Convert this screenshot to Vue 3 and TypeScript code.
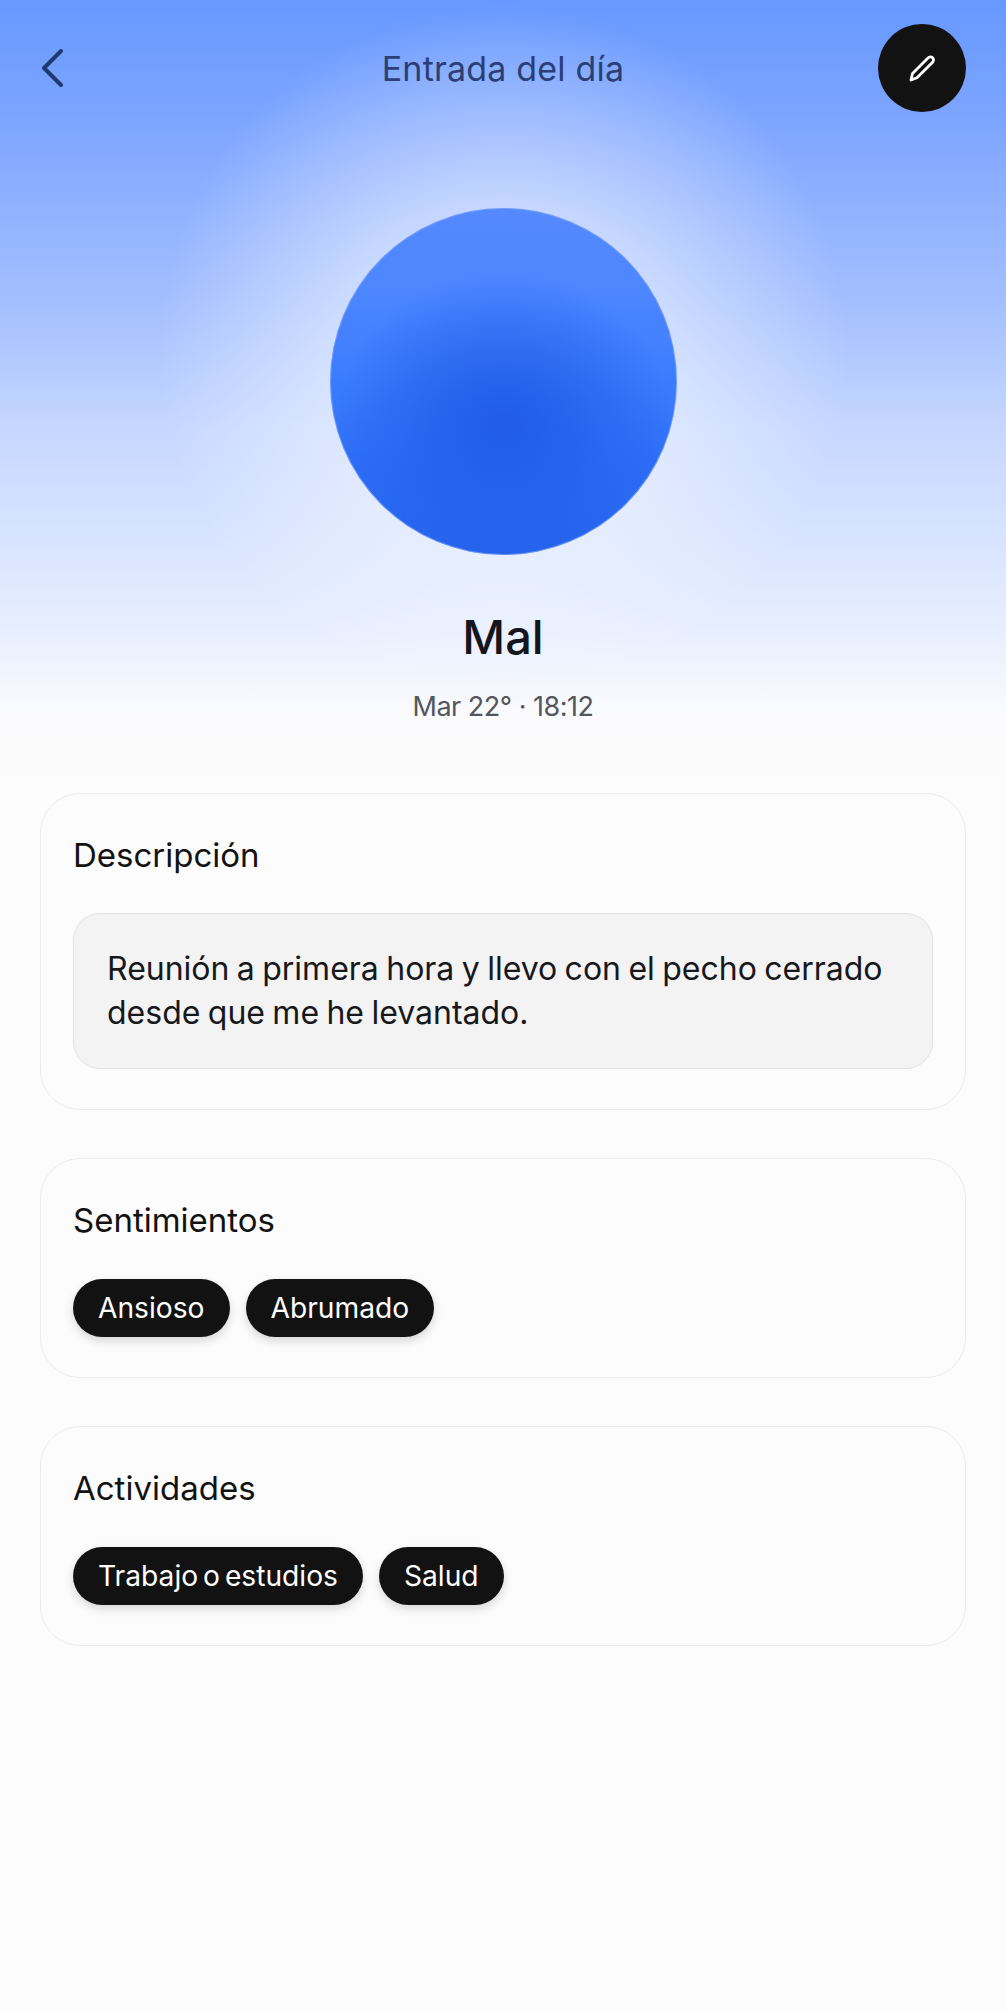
<template>
  <div class="page">
    <section class="hero">
      <header class="topbar">
        <button class="back" aria-label="Volver">
          <svg width="24" height="40" viewBox="0 0 24 40" fill="none">
            <path d="M21 3 L4 20 L21 37" stroke="#20396f" stroke-width="4" stroke-linecap="round" stroke-linejoin="round" />
          </svg>
        </button>
        <h1 class="title">Entrada del día</h1>
        <button class="edit" aria-label="Editar">
          <svg width="30" height="30" viewBox="0 0 30 30" fill="none">
            <path
              d="M4 27 L5.5 20.5 L21 5 C22.4 3.6 24.4 3.6 25.6 4.8 C26.8 6 26.8 8 25.4 9.4 L10 24.8 Z"
              stroke="#fff"
              stroke-width="2.8"
              stroke-linejoin="round"
            />
          </svg>
        </button>
      </header>
      <div class="orb"></div>
      <h2 class="mood">{{ entry.mood }}</h2>
      <p class="date">{{ entry.date }}</p>
    </section>

    <main class="cards">
      <section class="card">
        <h3 class="card-title desc-title">Descripción</h3>
        <div class="desc">{{ entry.description }}</div>
      </section>
      <section v-for="group in groups" :key="group.title" class="card">
        <h3 class="card-title">{{ group.title }}</h3>
        <div class="chips">
          <span v-for="tag in group.tags" :key="tag" class="chip">{{ tag }}</span>
        </div>
      </section>
    </main>
  </div>
</template>

<script setup lang="ts">
const entry = {
  mood: 'Mal',
  date: 'Mar 22° · 18:12',
  description: 'Reunión a primera hora y llevo con el pecho cerrado desde que me he levantado.',
}

const groups = [
  { title: 'Sentimientos', tags: ['Ansioso', 'Abrumado'] },
  { title: 'Actividades', tags: ['Trabajo o estudios', 'Salud'] },
]
</script>

<style>
html,
body {
  background: #fcfcfc;
}
</style>

<style scoped>
.page {
  width: 1006px;
  min-height: 2012px;
  background: #fcfcfc;
  font-family: Inter, 'Noto Sans', sans-serif;
  color: #121212;
}

.hero {
  height: 793px;
  padding: 24px 40px 0;
  box-sizing: border-box;
  display: flex;
  flex-direction: column;
  align-items: center;
  background:
    radial-gradient(circle 345px at 503px 350px, rgba(255, 255, 255, 0.5) 40%, rgba(255, 255, 255, 0) 100%),
    linear-gradient(180deg, #6698ff 0%, #7fa6ff 16%, #a3bfff 38%, #c6d7ff 54%, #d8e4ff 68%, #e8effe 80%, #fbfbfd 90%, #fcfcfc 100%);
}

.topbar {
  width: 100%;
  height: 88px;
  display: grid;
  grid-template-columns: 1fr auto 1fr;
  align-items: center;
}

.back,
.edit {
  border: none;
  padding: 0;
  display: flex;
  align-items: center;
  justify-content: center;
}

.back {
  width: 24px;
  background: none;
}

.edit {
  width: 88px;
  height: 88px;
  justify-self: end;
  border-radius: 50%;
  background: #121212;
}

.title {
  margin: 0;
  font-size: 34px;
  font-weight: 400;
  color: #2b3f75;
  letter-spacing: 0.2px;
}

.orb {
  width: 347px;
  height: 347px;
  margin-top: 96px;
  flex-shrink: 0;
  border-radius: 50%;
  background:
    radial-gradient(ellipse 170px 150px at 50% 62%, #205ce6 0%, rgba(32, 92, 230, 0.55) 50%, rgba(32, 92, 230, 0) 100%),
    linear-gradient(180deg, #5589ff 0%, #4c86ff 25%, #3b7cff 50%, #2d6ef6 75%, #2664ec 100%);
  box-shadow: inset 0 0 0 1px rgba(130, 165, 255, 0.7);
}

.mood {
  margin: 52px 0 0;
  font-size: 47px;
  line-height: 60px;
  font-weight: 500;
  color: #14161c;
}

.date {
  margin: 22px 0 0;
  font-size: 27px;
  line-height: 36px;
  letter-spacing: -0.5px;
  color: #53565e;
}

.cards {
  padding: 0 40px;
  display: flex;
  flex-direction: column;
  gap: 48px;
}

.card {
  border: 1px solid #ececec;
  border-radius: 40px;
  padding: 39px 32px 40px;
  background: #fcfcfc;
}

.card-title {
  margin: 0 0 37px;
  font-size: 33px;
  line-height: 44px;
  font-weight: 400;
  color: #121212;
}

.desc-title {
  margin-bottom: 36px;
}

.desc {
  border: 1px solid #e2e2e2;
  border-radius: 27px;
  background: #f3f3f3;
  padding: 33px 33px;
  font-size: 32px;
  line-height: 44px;
  word-spacing: -1.6px;
  color: #17181c;
}

.chips {
  display: flex;
  gap: 16px;
}

.chip {
  height: 58px;
  line-height: 58px;
  padding: 0 25px;
  border-radius: 29px;
  background: #121212;
  color: #fff;
  font-size: 28.2px;
  word-spacing: -3px;
  box-shadow: 0 4px 10px rgba(0, 0, 0, 0.15);
}
</style>
